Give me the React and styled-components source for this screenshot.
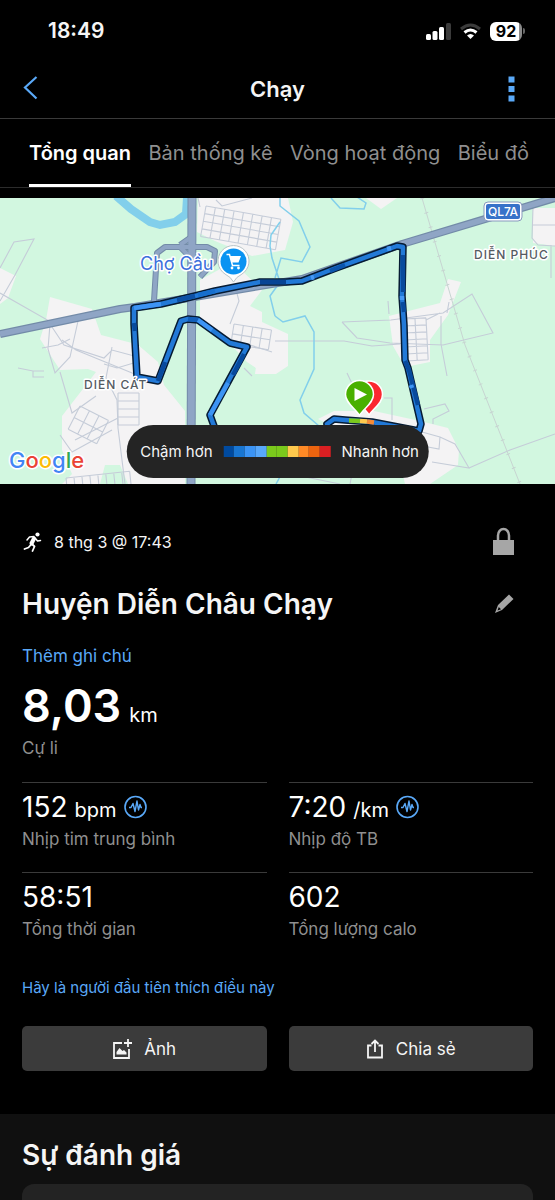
import React from "react";
import styled, { createGlobalStyle } from "styled-components";

const GlobalStyle = createGlobalStyle`
  *, *::before, *::after { box-sizing: border-box; }
  body { margin: 0; background: #000; color: #f5f5f5; font-family: Inter, "Liberation Sans", sans-serif; }
  button { font: inherit; color: inherit; border: 0; padding: 0; background: none; cursor: pointer; }
  h1, h2, p, dl, dd, dt { margin: 0; font-weight: 400; }
  svg { display: block; flex: none; }
`;

const Screen = styled.div`
  min-height: 100vh;
  display: flex;
  flex-direction: column;
  overflow: hidden;
`;

const StatusBar = styled.header`
  display: flex;
  align-items: center;
  justify-content: space-between;
  height: 60px;
  padding: 2px 30px 0 48px;
`;

const Clock = styled.time`
  font-size: 21px;
  line-height: 24px;
  font-weight: 600;
`;

const StatusIcons = styled.div`
  display: flex;
  align-items: center;
  gap: 9px;
`;

const BatteryRow = styled.div`
  display: flex;
  align-items: center;
  gap: 1px;
`;

const Battery = styled.span`
  width: 32px;
  border-radius: 6px;
  background: linear-gradient(90deg, #fff 92%, #8a8a8a 92%);
  color: #000;
  font-size: 16px;
  line-height: 19px;
  font-weight: 700;
  text-align: center;
`;

const BatteryTip = styled.span`
  width: 2px;
  height: 6px;
  border-radius: 0 2px 2px 0;
  background: #666;
`;

const NavBar = styled.nav`
  display: grid;
  grid-template-columns: 1fr auto 1fr;
  align-items: center;
  height: 59px;
  padding: 0 22px;
  border-bottom: 1px solid #3a3a3a;
`;

const NavTitle = styled.h1`
  font-size: 22px;
  line-height: 28px;
  font-weight: 600;
`;

const NavButton = styled.button`
  display: flex;
  justify-self: ${(p) => p.$side};
`;

const MenuButton = styled(NavButton)`
  padding-right: 18px;
`;

const Tabs = styled.div`
  display: flex;
  justify-content: space-between;
  height: 69px;
  padding: 0 26px 0 29px;
  border-bottom: 1px solid #2c2c2c;
  margin-bottom: 10px;
`;

const Tab = styled.button`
  height: 68px;
  padding-top: 3px;
  font-size: 20px;
  line-height: 24px;
  white-space: nowrap;
  font-weight: ${(p) => (p.$active ? 600 : 400)};
  color: ${(p) => (p.$active ? "#fff" : "#8f8f8f")};
  border-bottom: 3px solid ${(p) => (p.$active ? "#fff" : "transparent")};
`;

const MapPanel = styled.section`
  position: relative;
  height: 286px;
  background: #d2f7e0;
`;

const MapDrawing = styled.svg`
  width: 100%;
  height: 100%;
`;

const HaloLabels = styled.g`
  font-family: Inter, sans-serif;
  font-weight: ${(p) => p.$weight};
  stroke: #fff;
  stroke-width: 3px;
  stroke-linejoin: round;
  paint-order: stroke;
`;

const Legend = styled.div`
  position: absolute;
  left: 50%;
  bottom: 6px;
  transform: translateX(-50%);
  display: flex;
  align-items: center;
  gap: 11px;
  height: 53px;
  padding: 0 10px 0 14px;
  border-radius: 27px;
  background: #242424;
  white-space: nowrap;
  font-size: 15px;
  line-height: 20px;
`;

const LegendScale = styled.div`
  display: grid;
  grid-template-columns: repeat(10, 1fr);
  width: 107px;
  height: 11px;
`;

const Swatch = styled.span`
  background: ${(p) => p.$color};
`;

const Body = styled.main`
  display: flex;
  flex-direction: column;
  padding: 43px 22px;
`;

const Row = styled.div`
  display: flex;
  align-items: center;
  justify-content: space-between;
  padding-right: 18px;
`;

const DateLine = styled.p`
  display: flex;
  align-items: center;
  gap: 11px;
  height: 30px;
  font-size: 16px;
  line-height: 20px;
`;

const Title = styled.h2`
  font-size: 28px;
  line-height: 36px;
  font-weight: 600;
`;

const TitleRow = styled(Row)`
  margin-top: 29px;
`;

const TextLink = styled.a`
  align-self: flex-start;
  color: #5aa9f8;
  text-decoration: none;
  font-size: ${(p) => (p.$small ? 15 : 17)}px;
  line-height: 24px;
`;

const NoteLink = styled(TextLink)`
  margin-top: 22px;
`;

const LikeLink = styled(TextLink)`
  margin-top: 14px;
`;

const Stat = styled.div`
  display: flex;
  flex-direction: column;
`;

const MainStat = styled(Stat)`
  margin-top: 11px;
`;

const StatGrid = styled.dl`
  display: grid;
  grid-template-columns: 1fr 1fr;
  column-gap: 22px;
  margin-top: 19px;
`;

const GridStat = styled(Stat)`
  height: 90px;
  padding-top: 7px;
  border-top: 1px solid #3a3a3a;
`;

const Value = styled.dd`
  display: flex;
  align-items: baseline;
  gap: ${(p) => (p.$large ? 8 : 7)}px;
  font-size: ${(p) => (p.$large ? 45 : 28)}px;
  line-height: ${(p) => (p.$large ? 54 : 34)}px;
  font-weight: ${(p) => (p.$large ? 600 : 400)};
  color: #fff;
`;

const Unit = styled.span`
  font-size: 20px;
  line-height: 24px;
  font-weight: 400;
`;

const PulseIcon = styled.svg`
  align-self: center;
`;

const Label = styled.dt`
  order: 1;
  font-size: 17px;
  line-height: 30px;
  color: #8f8f8f;
`;

const Actions = styled.div`
  display: grid;
  grid-template-columns: 1fr 1fr;
  gap: 22px;
  margin-top: 26px;
`;

const ActionButton = styled.button`
  display: flex;
  align-items: center;
  justify-content: center;
  gap: 12px;
  height: 45px;
  border-radius: 5px;
  background: #3b3b3b;
  font-size: 17px;
  line-height: 24px;
`;

const Review = styled.section`
  flex: 1;
  display: flex;
  flex-direction: column;
  gap: 11px;
  padding: 23px 22px 0;
  background: #101010;
`;

const ReviewCard = styled.div`
  flex: 1;
  min-height: 17px;
  border-radius: 12px 12px 0 0;
  background: #232323;
`;

const legendColors = ["#004a9f", "#1976d2", "#3b94f5", "#58a8fb", "#7ac91c", "#7ac91c", "#ffc94d", "#ff8a26", "#ec640f", "#da1f22"];

const route = "M327 424 L334 419 L345 420 L372 422 L419 431 L421 424 L408 368 L405 360 L404 325 L402 296 L403 247 L397 246 L336 268 L302 281 L286 282 L260 282 L215 291 L195 296 L161 304 L134 308 L134 324 L137 377 L158 381 L181 321 L188 319 L198 320 L230 343 L247 347 L210 415 L214 426";

const routeParts = [
  ["M134 308L161 304", "#3d94f4"], ["M195 296L177 300", "#0d50a5"], ["M215 291L198 295", "#176fce"],
  ["M260 282L286 282", "#084595"], ["M330 271L345 265", "#0c55ad"], ["M311 278L314 277", "#4799f5"],
  ["M387 249L391 248", "#4799f5"], ["M403 255V292", "#084a9d"], ["M402 296V300", "#4799f5"],
  ["M403 302L404 312", "#084a9d"], ["M405 361L409 370L418 405", "#084a9d"], ["M411 385L412 388", "#3d94f4"],
  ["M134 323L135 331", "#084a9d"], ["M158 381L165 362", "#084a9d"], ["M188 319L198 320", "#125eb9"],
  ["M198 320L212 330", "#3d94f4"], ["M244 354L233 375", "#084a9d"], ["M228 383L210 415", "#3d94f4"],
];

function Block({ x, y, w, h, cols, rows, rotate = 0 }) {
  const lines = [];
  for (let i = 0; i <= cols; i += 1) lines.push(`M${(w / cols) * i} 0V${h}`);
  for (let j = 0; j <= rows; j += 1) lines.push(`M0 ${(h / rows) * j}H${w}`);
  return <path transform={`translate(${x} ${y}) rotate(${rotate})`} d={lines.join("")} />;
}

function RouteMap() {
  return (
    <MapDrawing viewBox="0 198 555 286" preserveAspectRatio="xMidYMid slice" role="img" aria-label="Chợ Cầu">
      <rect y="198" width="555" height="286" fill="#d2f7e0" />
      <g fill="#f4f3f4">
        <path d="M198 198H288L293 222L285 250L252 256L215 241L197 232Z" />
        <path d="M0 268L16 276L8 298L0 304Z" />
        <path d="M50 297L92 309L101 335L132 343L137 344L158 362L164 385L185 411V484H128L120 465H105L100 484H62L72 474L62 450L62 416L96 372L88 369L60 370L40 339L46 320Z" />
        <path d="M200 280L233 262L262 290L250 306L262 312V372L247 362L225 338L200 318Z" />
        <path d="M262 322L288 334V366L276 374H255Z" />
        <path d="M366 198H397L381 209Z" />
        <path d="M533 208H555V246L533 243Z" />
        <path d="M389 316L440 303L448 279L461 282L448 315L430 340V362L405 367L393 346Z" />
        <path d="M318 419L334 411H374L420 421L448 428L459 450L458 465L430 484H405L395 440L340 430Z" />
      </g>
      <g fill="none" stroke="#c5ccd8" strokeWidth="1.1">
        <Block x={206} y={206} w={76} h={31} cols={8} rows={4} rotate={10} />
        <Block x={404} y={319} w={22} h={42} cols={2} rows={6} rotate={-3} />
        <Block x={234} y={324} w={38} h={20} cols={4} rows={2} rotate={9} />
        <Block x={80} y={406} w={32} h={26} cols={3} rows={2} rotate={27} />
        <Block x={118} y={393} w={21} h={32} cols={1} rows={4} />
        <Block x={66} y={478} w={64} h={20} cols={8} rows={1} rotate={-6} />
        <path d="M0 268L14 242L34 239L15 275L0 301M0 293L49 321L60 319L78 321L70 357L55 373L48 349L50 324L64 345L104 358L112 350L138 357M62 340L76 350L137 375M42 348L58 345L70 339M18 368L33 371L44 371M33 371V377H44M60 372L72 413L96 396M112 347L106 378L117 400L118 428L125 484M137 362L117 368L104 364M75 440L118 418M60 435L72 452L112 430M198 198L200 207M216 200L222 206L252 198M235 286L239 301L230 324M250 345L272 352M244 368L252 376M533 208L532 238L538 245L555 246M532 225H555M551 245V278" />
        <path d="M342 322L391 320L443 313L472 294L493 333L443 345L390 343L357 338L342 322M389 314L388 301M447 313L449 302M441 316V344L447 376M426 320L440 313M275 341H344L372 346L400 344M347 373L356 392M384 398H392V420M424 409L445 404L449 411L433 419V424M422 432L440 437L455 444L469 468L432 462M440 437L439 449L428 447M469 468L510 450L555 434M276 471L340 484M352 474L350 484" />
      </g>
      <g fill="none" stroke="#c7d4d1" strokeWidth="1">
        <path d="M422 198L465 345L520 484" />
        <path d="M422 198L465 345L520 484" strokeWidth="4" strokeDasharray="1 14" />
      </g>
      <g fill="none" stroke="#82cfeb">
        <path d="M116 196L131 209L150 222L160 225L175 222L186 214L187 198" strokeWidth="8" />
        <path d="M280 196V206L299 221L310 247L302 262L281 258L275 278M275 316L283 322L305 316L314 332V369L300 400L304 413L319 426M331 198L340 208L364 209L366 203L357 197M280 222L271 235L270 246L272 258L280 282L270 296L275 316M281 475L276 484" strokeWidth="1.5" />
      </g>
      <g fill="none" stroke="#738ba8" strokeLinejoin="round">
        <path d="M154 301L157 253L165 247H207L215 251L214 262L200 277M180 245L190 238M180 247L190 257" strokeWidth="6" />
        <path d="M192 198L191 484" strokeWidth="9" />
        <path d="M0 334L120 309L135 307L302 279L402 244L555 198" strokeWidth="8" />
      </g>
      <g fill="none" stroke="#8fa5c5" strokeLinejoin="round">
        <path d="M154 301L157 253L165 247H207L215 251L214 262L200 277M180 245L190 238M180 247L190 257" strokeWidth="4" />
        <path d="M192 198L191 484" strokeWidth="7" />
        <path d="M0 334L120 309L135 307L302 279L402 244L555 198" strokeWidth="5.5" />
      </g>
      <g fill="none" strokeLinejoin="round" strokeLinecap="round">
        <path d={route} stroke="#061b33" strokeWidth="7.5" />
        <path d={route} stroke="#2279d7" strokeWidth="4.5" />
      </g>
      <g fill="none" strokeWidth="4.5">
        {routeParts.map(([d, color]) => <path key={d} d={d} stroke={color} />)}
        <path d="M349 420.500L360 421" stroke="#7ac91c" />
        <path d="M360 421L367 421.500" stroke="#ffc94d" />
        <path d="M367 421.500L374 422.500" stroke="#f58a36" />
      </g>
      <path d="M369 415C365 408 355.500 403 355.500 394.500A13.500 13.500 0 0 1 382.500 394.500C382.500 403 374 408 369 415Z" fill="#fb2730" stroke="#fff" strokeWidth="1.500" />
      <path d="M359.500 415.500C355 408 345.500 403 345.500 394.500A14 14 0 0 1 373.500 394.500C373.500 403 364 408 359.500 415.500Z" fill="#4ab000" stroke="#fff" strokeWidth="1.500" />
      <path d="M354.500 388V401L367 394.500Z" fill="#fff" />
      <path d="M233.500 282Q231 277 225 274A15.500 15.500 0 1 1 242 274Q236 277 233.500 282Z" fill="#fff" stroke="#b9c4c8" strokeWidth="1" />
      <circle cx="233.500" cy="261.500" r="13" fill="#0a93f2" />
      <path d="M226.500 254.500H229.500L232.500 265.500H239.500" fill="none" stroke="#fff" strokeWidth="1.500" />
      <path d="M230 256H241L238.500 262.500H231.800Z" fill="#fff" />
      <circle cx="232" cy="268" r="1.400" fill="#fff" /><circle cx="238.500" cy="268" r="1.400" fill="#fff" />
      <rect x="484" y="202" width="38" height="19" rx="4" fill="#fff" stroke="#8799bd" strokeWidth="1" />
      <rect x="486" y="204" width="34" height="15" rx="2" fill="#3772c9" />
      <text x="503" y="216" fontSize="12" fontWeight="500" fontFamily="Inter, sans-serif" textAnchor="middle" fill="#fff">QL7A</text>
      <HaloLabels $weight={400}>
        <text x="140" y="270" fontSize="18" fill="#3c70dc">Chợ Cầu</text>
      </HaloLabels>
      <HaloLabels $weight={500}>
        <text x="84" y="389" fontSize="12" fill="#555b62" letterSpacing="1">DIỄN CÁT</text>
        <text x="474" y="259" fontSize="12" fill="#555b62" letterSpacing="1">DIỄN PHÚC</text>
        <text x="9" y="468" fontSize="22">
          <tspan fill="#4285f4">G</tspan><tspan fill="#ea4335">o</tspan><tspan fill="#fbbc05">o</tspan><tspan fill="#4285f4">g</tspan><tspan fill="#34a853">l</tspan><tspan fill="#ea4335">e</tspan>
        </text>
      </HaloLabels>
    </MapDrawing>
  );
}

function Pulse() {
  return (
    <PulseIcon width="23" height="24" viewBox="0 0 23 24" fill="none" stroke="#5aa9f8" aria-hidden="true">
      <circle cx="11.500" cy="12" r="10.500" strokeWidth="1.600" />
      <path d="M5 12.500H7L9 8.500L11 16.500L13 6L14.500 15L16 9.500L17 12.500H18" strokeWidth="1.400" strokeLinejoin="round" />
    </PulseIcon>
  );
}

const stats = [
  { label: "Nhịp tim trung bình", value: "152", unit: "bpm", pulse: true },
  { label: "Nhịp độ TB", value: "7:20", unit: "/km", pulse: true },
  { label: "Tổng thời gian", value: "58:51" },
  { label: "Tổng lượng calo", value: "602" },
];

const tabs = ["Tổng quan", "Bản thống kê", "Vòng hoạt động", "Biểu đồ"];

export default function App() {
  return (
    <Screen>
      <GlobalStyle />
      <StatusBar>
        <Clock>18:49</Clock>
        <StatusIcons>
          <svg width="25" height="17" viewBox="0 0 25 17" fill="#fff" aria-hidden="true">
            <rect y="11" width="5" height="6" rx="1.500" /><rect x="6.500" y="8" width="5" height="9" rx="1.500" />
            <rect x="13" y="4" width="5" height="13" rx="1.500" /><rect x="20" width="5" height="17" rx="1.500" fill="#3b3b3b" />
          </svg>
          <svg width="21" height="17" viewBox="0 0 21 17" fill="none" strokeWidth="3" aria-hidden="true">
            <path d="M1 6Q10.500 -2 20 6" stroke="#3b3b3b" /><path d="M4.500 9.500Q10.500 4.500 16.500 9.500" stroke="#fff" />
            <path d="M7 12.500Q10.500 9.500 14 12.500L10.500 16Z" fill="#fff" stroke="none" />
          </svg>
          <BatteryRow><Battery>92</Battery><BatteryTip /></BatteryRow>
        </StatusIcons>
      </StatusBar>
      <NavBar>
        <NavButton $side="start" aria-label="Quay lại">
          <svg width="17" height="26" viewBox="0 0 17 26" fill="none" stroke="#5aa9f8" strokeWidth="2.200"><path d="M14.500 1L3 11.500L14.500 22.500" /></svg>
        </NavButton>
        <NavTitle>Chạy</NavTitle>
        <MenuButton $side="end" aria-label="Menu">
          <svg width="7" height="27" viewBox="0 0 7 27" fill="#5aa9f8"><path d="M0.500 0.500h6v6h-6zM0.500 10h6v6h-6zM0.500 19.500h6v6h-6z" /></svg>
        </MenuButton>
      </NavBar>
      <Tabs role="tablist">
        {tabs.map((tab, i) => <Tab key={tab} role="tab" aria-selected={i === 0} $active={i === 0}>{tab}</Tab>)}
      </Tabs>
      <MapPanel>
        <RouteMap />
        <Legend>
          Chậm hơn
          <LegendScale>{legendColors.map((c, i) => <Swatch key={i} $color={c} />)}</LegendScale>
          Nhanh hơn
        </Legend>
      </MapPanel>
      <Body>
        <Row>
          <DateLine>
            <svg width="21" height="20" viewBox="0 0 21 20" fill="none" stroke="#fff" strokeLinecap="round" strokeLinejoin="round" aria-hidden="true">
              <circle cx="15.500" cy="2.500" r="2.100" fill="#fff" stroke="none" />
              <path d="M12 6.500L9.500 11.500" strokeWidth="4" /><path d="M12 4.500L7.500 5L5 8M13.500 6.500L15.500 9L18.500 8.500" strokeWidth="1.500" />
              <path d="M9.500 12L6.500 15.500L2.500 17M10 12L12.500 14.500L10.500 19" strokeWidth="1.800" />
            </svg>
            8 thg 3 @ 17:43
          </DateLine>
          <svg width="23" height="30" viewBox="0 0 23 30" aria-hidden="true">
            <path d="M6 14V8.500A5.500 6.500 0 0 1 17 8.500V14" fill="none" stroke="#a6a6a6" strokeWidth="2.500" /><path d="M1 13H22V28H1Z" fill="#a6a6a6" />
          </svg>
        </Row>
        <TitleRow>
          <Title>Huyện Diễn Châu Chạy</Title>
          <NavButton aria-label="Chỉnh sửa">
            <svg width="22" height="20" viewBox="0 0 22 20" fill="#a6a6a6">
              <path d="M16 0.500L20.500 5L9 16L2 19L5 11ZM5.800 13L4.500 16.500L8 15.200Z" fillRule="evenodd" />
            </svg>
          </NavButton>
        </TitleRow>
        <NoteLink href="#note">Thêm ghi chú</NoteLink>
        <dl>
          <MainStat>
            <Label>Cự li</Label>
            <Value $large>8,03<Unit>km</Unit></Value>
          </MainStat>
        </dl>
        <StatGrid>
          {stats.map((s) => (
            <GridStat key={s.label}>
              <Label>{s.label}</Label>
              <Value>{s.value}{s.unit && <Unit>{s.unit}</Unit>}{s.pulse && <Pulse />}</Value>
            </GridStat>
          ))}
        </StatGrid>
        <LikeLink href="#like" $small>Hãy là người đầu tiên thích điều này</LikeLink>
        <Actions>
          <ActionButton>
            <svg width="20" height="20" viewBox="0 0 20 20" fill="none" stroke="#f5f5f5" strokeWidth="1.800" aria-hidden="true">
              <path d="M10 4H2V19H17V10M12 4H20M16 0V8" /><path d="M4.500 15.500V13L7.500 9L10.500 12L12 11L14.500 13.500V15.500Z" fill="#f5f5f5" stroke="none" />
            </svg>
            Ảnh
          </ActionButton>
          <ActionButton>
            <svg width="18" height="20" viewBox="0 0 18 20" fill="none" stroke="#f5f5f5" strokeWidth="1.800" aria-hidden="true">
              <path d="M5.500 6.500H2V18.500H16V6.500H12.500M9 13V2M5.500 5L9 1.500L12.500 5" />
            </svg>
            Chia sẻ
          </ActionButton>
        </Actions>
      </Body>
      <Review>
        <Title>Sự đánh giá</Title>
        <ReviewCard />
      </Review>
    </Screen>
  );
}
